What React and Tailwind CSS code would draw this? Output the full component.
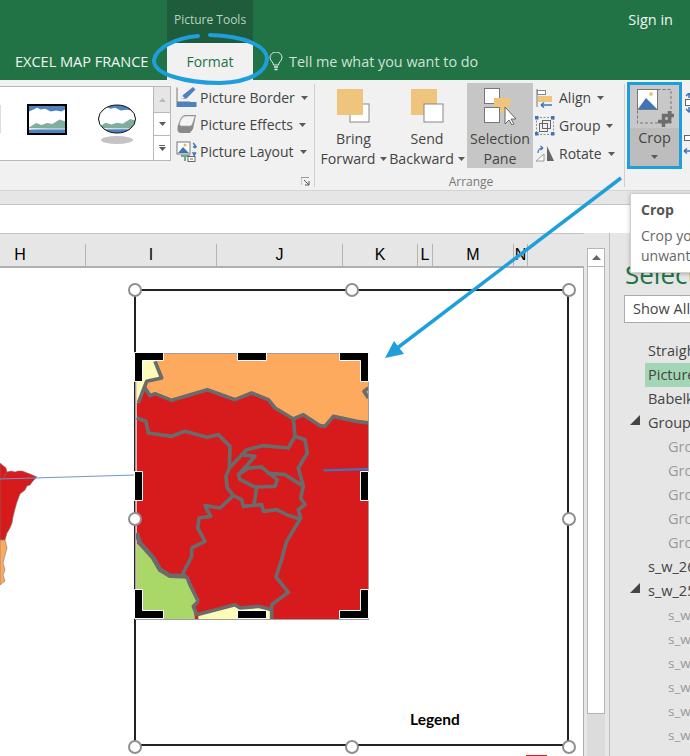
import React from "react";

const FONT = "font-['Open_Sans','Noto_Sans',sans-serif]";

function Caret({ className = "" }) {
  return <svg width="7" height="4" viewBox="0 0 7 4" className={className}><path d="M0 0h7L3.500 4z" fill="#5a5a5a" /></svg>;
}

function SmallRow({ icon, label, height = "h-[27px]" }) {
  return (
    <div className={`flex items-center ${height} gap-[3px]`}>
      <div className="w-[21px] h-[21px] shrink-0">{icon}</div>
      <span className="text-[14px] leading-none text-[#444] whitespace-nowrap">{label}</span>
      <Caret className="ml-[3px] shrink-0" />
    </div>
  );
}

const BorderIcon = (
  <svg viewBox="0 0 21 21" width="21" height="21">
    <path d="M1 .5V15M1 15h13" stroke="#777" strokeWidth="1" fill="none" />
    <path d="M5 12l2-4 10-8 2.500 2.500-9 9z" fill="#4f81bd" />
    <path d="M5 12l1.500-3 2 2z" fill="#fff" />
    <rect x="0.500" y="15" width="20" height="5" fill="#4f81bd" />
  </svg>
);
const EffectsIcon = (
  <svg viewBox="0 0 21 21" width="21" height="21">
    <path d="M4 6c1-3 3-5 6-5h10l-3 14-3 4H5C1 19 1 15 2 11z" fill="#8a8a8a" />
    <path d="M4 8c1-3 3-6 6-6h9l-3 9-2 1H6c-2 0-3-1-2-4z" fill="#f4f4f4" stroke="#aaa" strokeWidth=".6" />
  </svg>
);
const LayoutIcon = (
  <svg viewBox="0 0 21 21" width="21" height="21">
    <rect x="1" y="1" width="13" height="12" fill="#fff" stroke="#777" />
    <path d="M2 12l5-6 6 6z" fill="#3f75b5" />
    <circle cx="9" cy="4" r="1.500" fill="#e8b35a" />
    <path d="M17 2c2 1 3 2 2 5M19 7l-2-1.500M19 7l1.500-2M17 12l2.500 0-1.200 2.500z" stroke="#3f75b5" strokeWidth="1.300" fill="#3f75b5" />
    <path d="M5 14h9v2h-4v4H8v-4H5z" fill="#6fa88e" />
    <rect x="12" y="15.500" width="7" height="5" fill="#fff" stroke="#666" />
    <path d="M14 18h3" stroke="#666" />
  </svg>
);
const AlignIcon = (
  <svg viewBox="0 0 20 20" width="20" height="20">
    <path d="M2 1v18" stroke="#777" />
    <rect x="2.500" y="2.500" width="8" height="4" fill="#fff" stroke="#888" />
    <rect x="3" y="8" width="14" height="6" fill="#efc57d" />
    <path d="M17 17H6M6 17l3-2.500M6 17l3 2.500" stroke="#3f75b5" strokeWidth="1.500" fill="none" />
  </svg>
);
const GroupIcon = (
  <svg viewBox="0 0 20 20" width="20" height="20">
    <rect x="1.500" y="1.500" width="17" height="17" fill="none" stroke="#777" strokeDasharray="2 1.500" strokeWidth=".8" />
    <rect x="4.500" y="7.500" width="8" height="8" fill="none" stroke="#666" />
    <rect x="7.500" y="4.500" width="8" height="8" fill="none" stroke="#666" />
    {[[0, 0], [16, 0], [0, 16], [16, 16]].map(([x, y]) => <rect key={`${x}${y}`} x={x} y={y} width="3.500" height="3.500" fill="#3f75b5" />)}
  </svg>
);
const RotateIcon = (
  <svg viewBox="0 0 20 20" width="20" height="20">
    <path d="M1 17L9 10v7z" fill="#fff" stroke="#999" />
    <path d="M12 2l7 15h-7z" fill="#666" />
    <path d="M3 9c0-4 2-5 5-5M8 4L5.500 2M8 4L5.500 6" stroke="#3f75b5" strokeWidth="1.200" fill="none" />
  </svg>
);

function ArrangeButton({ top, bottom, icon, width, active, caret }) {
  return (
    <div className={`flex flex-col items-center h-[85px] ${width} ${active ? "bg-[#c6c6c6]" : ""}`}>
      <div className={`h-[46px] shrink-0 flex items-start ${active ? "pt-[5px]" : "pt-[6px]"}`}>{icon}</div>
      <span className="text-[14.200px] leading-[20px] text-[#444] whitespace-nowrap">{top}</span>
      <span className="text-[14.200px] leading-[20px] text-[#444] whitespace-nowrap flex items-center">
        {bottom}
        {caret && <Caret className="ml-[4px]" />}
      </span>
    </div>
  );
}

function Landscape({ x, y, w, h }) {
  const sx = w / 40;
  const sy = h / 30;
  const p = pts => pts.map(([a, b]) => `${x + a * sx},${y + b * sy}`).join(" ");
  return (
    <g>
      <rect x={x} y={y} width={w} height={h} fill="#4f81bd" />
      <polygon points={p([[0, 6], [5, 4], [9, 2], [13, 4], [18, 3], [24, 6], [30, 5], [36, 6], [40, 4], [40, 23], [0, 26]])} fill="#fff" />
      <polygon points={p([[0, 24], [8, 19], [14, 21], [20, 19], [26, 20], [34, 15], [40, 17], [40, 25], [0, 25]])} fill="#7fae9d" />
      <rect x={x} y={y + 25 * sy} width={w} height={1 * sy} fill="#fff" />
    </g>
  );
}

function Gallery() {
  return (
    <div className="flex h-[75px] w-[171px] mt-[6px] bg-white border-y border-r border-[#b8b8b8]">
      <div className="flex-1 relative">
        <svg width="153" height="73" viewBox="0 0 153 73" className="block">
          <defs>
            <clipPath id="oval"><ellipse cx="117" cy="32" rx="18.500" ry="14" /></clipPath>
          </defs>
          <path d="M0 18h1v28H0z" fill="#ddd" />
          <rect x="27" y="17" width="40" height="31" fill="#000" />
          <Landscape x={29} y={19} w={36} h={27} />
          <g clipPath="url(#oval)"><Landscape x={98} y={18} w={38} h={28} /></g>
          <ellipse cx="117" cy="32" rx="18.500" ry="14" fill="none" stroke="#111" strokeWidth="1" />
          <ellipse cx="117" cy="53" rx="16" ry="4" fill="#c4c4c4" />
        </svg>
      </div>
      <div className="w-[17px] flex flex-col border-l border-[#b8b8b8]">
        <div className="h-[26px] bg-[#e6e6e6] border-b border-[#b8b8b8] flex items-center justify-center">
          <svg width="7" height="4" viewBox="0 0 7 4"><path d="M3.500 0L7 4H0z" fill="#bbb" /></svg>
        </div>
        <div className="h-[23px] border-b border-[#b8b8b8] flex items-center justify-center"><Caret /></div>
        <div className="flex-1 flex flex-col items-center justify-center gap-[1px]">
          <div className="w-[6px] h-px bg-[#666]" />
          <Caret />
        </div>
      </div>
    </div>
  );
}

function Ribbon() {
  return (
    <div className="h-[111px] bg-[#f1f1f1] flex shrink-0 border-b border-[#d4d4d4]">
      <Gallery />
      <div className="w-[144px] shrink-0 relative border-r border-[#cfcfcf] mt-[4px] h-[103px] pl-[5px]">
        <div className="flex flex-col">
          <SmallRow icon={BorderIcon} label="Picture Border" />
          <SmallRow icon={EffectsIcon} label="Picture Effects" />
          <SmallRow icon={LayoutIcon} label="Picture Layout" />
        </div>
        <svg width="9" height="9" viewBox="0 0 9 9" className="absolute right-[4px] bottom-[1px]">
          <path d="M0 8V.5h8" stroke="#999" fill="none" />
          <path d="M3 3l5 5M8 4v4H4" stroke="#555" fill="none" />
        </svg>
      </div>
      <div className="w-[310px] shrink-0 relative border-r border-[#cfcfcf] mt-[4px] h-[103px]">
        <div className="flex pl-[5px] -mt-px">
          <ArrangeButton
            width="w-[67px]" top="Bring" bottom="Forward" caret
            icon={<svg width="33" height="35" viewBox="0 0 33 35"><rect x="13" y="15" width="19" height="18" fill="#fff" stroke="#888" /><rect x="0" y="0" width="26" height="26" fill="#efc57d" /></svg>}
          />
          <ArrangeButton
            width="w-[80px]" top="Send" bottom="Backward" caret
            icon={<svg width="33" height="35" viewBox="0 0 33 35"><rect x="0" y="0" width="26" height="26" fill="#efc57d" /><rect x="13" y="15" width="19" height="18" fill="#fff" stroke="#888" /></svg>}
          />
          <ArrangeButton
            width="w-[66px]" top="Selection" bottom="Pane" active
            icon={<svg width="33" height="37" viewBox="0 0 33 37"><rect x=".5" y=".5" width="15" height="15" fill="#fff" stroke="#777" /><rect x=".5" y="19.500" width="15" height="15" fill="#fff" stroke="#777" /><rect x="10" y="10" width="16" height="9" fill="#efc57d" /><rect x="16" y="19" width="6" height="6" fill="#efc57d" /><path d="M21 19v17l4-4 3 5 2-1-3-5h5z" fill="#fff" stroke="#666" /></svg>}
          />
          <div className="flex flex-col pl-[2px] pt-[1px]">
            <SmallRow icon={AlignIcon} label="Align" height="h-[28px]" />
            <SmallRow icon={GroupIcon} label="Group" height="h-[28px]" />
            <SmallRow icon={RotateIcon} label="Rotate" height="h-[28px]" />
          </div>
        </div>
        <div className="absolute left-0 right-0 -bottom-[3px] text-center text-[12px] leading-[16px] text-[#777] pl-[3px]">Arrange</div>
      </div>
      <div className="flex-1 relative min-w-0 pl-[2px]">
        <div className="w-[55px] h-[87px] mt-[2px] border-[3px] border-[#1e9fdb] bg-[#bdbdbd] flex flex-col items-center">
          <div className="w-full h-[43px] bg-[#c8c8c8] flex items-center justify-center shrink-0">
            <svg width="40" height="40" viewBox="0 0 40 40">
              <rect x="2.500" y="2.500" width="33.500" height="33.500" fill="none" stroke="#777" strokeDasharray="3 2" />
              <rect x="2.500" y="2.500" width="20" height="20" fill="#fff" stroke="#777" />
              <path d="M3 22l8-11 11 11z" fill="#3f75b5" />
              <circle cx="16" cy="7" r="2" fill="#efc57d" />
              <path d="M28.500 40V28.500H39M23 34.500H34.500V24" fill="none" stroke="#6e6e6e" strokeWidth="3.500" />
            </svg>
          </div>
          <span className="text-[14.500px] leading-[20px] text-[#444]">Crop</span>
          <Caret className="mt-[7px]" />
        </div>
        <svg width="10" height="64" viewBox="0 0 10 64" className="absolute left-[58px] top-[13px]">
          <path d="M3 3l3-3 3 3M6 0v5M3 16l3 3 3-3M6 14v5" stroke="#3f75b5" strokeWidth="1.500" fill="none" />
          <rect x="2.500" y="6.500" width="6" height="6" fill="#fff" stroke="#666" />
          <rect x="1.500" y="42.500" width="9" height="5" fill="#fff" stroke="#666" />
          <path d="M1 58h9M1 58l3-2.500M1 58l3 2.500" stroke="#3f75b5" strokeWidth="1.500" fill="none" />
        </svg>
      </div>
    </div>
  );
}

const COLS = [
  ["H", "w-[86px]", "pr-[45px]"],
  ["I", "w-[131px]", ""],
  ["J", "w-[126px]", ""],
  ["K", "w-[75px]", ""],
  ["L", "w-[15px]", ""],
  ["M", "w-[81px]", ""],
  ["N", "w-[14px]", ""],
];

function ColumnHeader() {
  return (
    <div className="h-[35px] bg-[#e6e6e6] border-t border-[#c4c4c4] border-b-2 border-b-[#b0b0b0] flex shrink-0 items-end">
      {COLS.map(([l, w, p]) => (
        <div key={l} className={`${w} ${p} h-[22px] shrink-0 border-r border-[#b4b4b4] flex items-center justify-center text-[16px] leading-none text-black font-['Liberation_Sans',sans-serif]`}>
          {l}
        </div>
      ))}
    </div>
  );
}

function Handle({ className }) {
  return <div className={`absolute w-[14px] h-[14px] rounded-full bg-white border-2 border-[#8f8f8f] ${className}`} />;
}

function CropHandle({ className, d, w, h }) {
  return (
    <svg width={w} height={h} viewBox={`0 0 ${w} ${h}`} className={`absolute ${className}`}>
      <path d={d} fill="#000" stroke="#fff" strokeWidth="1" />
    </svg>
  );
}

function MapPicture() {
  return (
    <div className="absolute left-[135px] top-[85px] w-[234px] h-[267px] border border-[#a0a0a0] bg-white">
      <svg width="232" height="265" viewBox="48 43 696 795" preserveAspectRatio="none" className="block">
        <rect x="50" y="43" width="694" height="795" fill="#d71a1c" />
        <polygon points="50,43 105,43 125,115 80,125 55,190 50,190" fill="#fdfbb8" />
        <polygon points="105,43 745,43 745,250 710,245 640,230 615,260 600,258 550,225 520,238 465,205 445,180 395,160 345,180 262,150 155,182 105,162 90,168 72,140 80,125 125,115" fill="#fdaa5e" />
        <polygon points="50,610 100,660 125,695 150,708 195,710 215,740 235,785 220,800 225,838 50,838" fill="#a9d869" />
        <polygon points="235,822 345,795 360,805 420,800 450,810 455,838 235,838" fill="#fdfbb8" />
        <g fill="none" stroke="#6b6b6b" strokeWidth="11" strokeLinejoin="round">
          <polyline points="105,65 125,115 80,125 55,190" />
          <polyline points="72,140 90,168 105,162 155,182 262,150 345,180 395,160 445,180 465,205 520,238 550,225 600,258 615,260 640,230 710,245 745,250" />
          <polyline points="50,235 78,245 85,280 155,290 195,275 262,293 295,285 330,320 328,385 318,410 322,445 340,468 300,505 255,498 272,530 237,535 233,565 255,605 215,625 215,650 187,705" />
          <polyline points="520,238 525,290 505,325 430,318 380,330 328,385" />
          <polyline points="525,290 555,300 562,340 535,385 550,440 542,475 555,495 535,510 542,535 500,605 490,640 485,660 468,712 505,758 455,795 455,838" />
          <polyline points="360,345 405,350 355,405 360,420 405,442 465,440 472,420 440,395 425,382 385,385 355,405" />
          <polyline points="340,468 365,480 370,500 425,495 430,515 470,510 500,525 540,538" />
          <polyline points="410,445 402,495" />
          <polyline points="440,400 495,405 550,440" />
          <polyline points="745,145 732,155 745,175" />
          <polyline points="235,785 220,800 230,825 345,795 360,805 415,800 455,810" />
          <polyline points="200,710 210,735 235,785" />
          <polyline points="50,580 60,610 100,655 120,690 150,708 200,710" strokeWidth="14" />
        </g>
        <path d="M610 392L745 388" stroke="#4a6fb5" strokeWidth="7" />
      </svg>
    </div>
  );
}

function Sheet() {
  return (
    <div className="flex-1 relative bg-white border-r border-[#b0b0b0] overflow-hidden">
      <svg width="140" height="140" viewBox="0 0 140 140" className="absolute left-0 top-[195px]">
        <polygon points="0,0 6,5 7,9 11,8 15,9 18,8 22,8 30,11 37,14 33,18 30,22 27,23 25,27 20,31 17,39 15,46 13,54 12,60 10,65 7,70 5,77 0,77" fill="#d71a1c" stroke="#777" strokeWidth=".6" />
        <polygon points="0,77 5,77 7,85 5,92 3,100 5,107 3,112 5,118 0,122" fill="#fdaa5e" stroke="#777" strokeWidth=".6" />
        <path d="M0 16L135 12" stroke="#6f96cc" strokeWidth="1" />
        <path d="M7 9L3 16" stroke="#777" strokeWidth=".6" />
      </svg>
      <div className="absolute left-[134px] top-[21px] w-[435px] h-[457px] border-2 border-[#222]" />
      <MapPicture />
      <Handle className="left-[128px] top-[15px]" />
      <Handle className="left-[345px] top-[15px]" />
      <Handle className="left-[562px] top-[15px]" />
      <Handle className="left-[128px] top-[244px]" />
      <Handle className="left-[562px] top-[244px]" />
      <Handle className="left-[128px] top-[472px]" />
      <Handle className="left-[345px] top-[472px]" />
      <Handle className="left-[562px] top-[472px]" />
      <CropHandle className="left-[134px] top-[84px]" w={30} h={30} d="M.5.500h29v8h-21v21h-8z" />
      <CropHandle className="left-[339px] top-[84px]" w={30} h={30} d="M.5.500h29v29h-8v-21h-21z" />
      <CropHandle className="left-[134px] top-[321px]" w={30} h={30} d="M.5.500h8v21h21v8H.5z" />
      <CropHandle className="left-[339px] top-[321px]" w={30} h={30} d="M21.500.500h8v29H.5v-8h21z" />
      <CropHandle className="left-[237px] top-[84px]" w={30} h={9} d="M.5.500h29v8H.5z" />
      <CropHandle className="left-[237px] top-[342px]" w={30} h={9} d="M.5.500h29v8H.5z" />
      <CropHandle className="left-[134px] top-[203px]" w={9} h={30} d="M.5.500h8v29h-8z" />
      <CropHandle className="left-[360px] top-[203px]" w={9} h={30} d="M.5.500h8v29h-8z" />
      <div className="absolute left-[410px] top-[442px] text-[15.500px] leading-[18px] font-bold text-black font-['Lato',sans-serif]">Legend</div>
      <div className="absolute left-[526px] top-[487px] w-[21px] h-[2px] bg-[#d71a1c]" />
    </div>
  );
}

function Scrollbar() {
  return (
    <div className="w-[26px] shrink-0 bg-[#e6e6e6] border-r border-[#bdbdbd] pl-[3px] pr-[4px] pt-[15px] flex flex-col">
      <div className="h-[19px] bg-white border border-[#b4b4b4] flex items-center justify-center shrink-0">
        <svg width="9" height="5" viewBox="0 0 9 5"><path d="M4.500 0L9 5H0z" fill="#666" /></svg>
      </div>
      <div className="h-[447px] bg-white border-x border-b border-[#b4b4b4] shrink-0" />
      <div className="flex-1 bg-[#dcdcdc]" />
    </div>
  );
}

const ROWS = [
  ["Straight Arrow Connector 5", 0],
  ["Picture 3", 0, "sel"],
  ["Babelkit Logo", 0],
  ["Group 12", 0, "tri"],
  ["Group 7", 1],
  ["Group 8", 1],
  ["Group 9", 1],
  ["Group 10", 1],
  ["Group 11", 1],
  ["s_w_26", 0],
  ["s_w_25", 0, "tri"],
  ["s_w_24", 2],
  ["s_w_23", 2],
  ["s_w_22", 2],
  ["s_w_21", 2],
  ["s_w_20", 2],
  ["s_w_19", 2],
];

function Pane() {
  return (
    <div className="flex-1 min-w-0 bg-[#e6e6e6] overflow-hidden pt-[24px]">
      <div className="pl-[15px] text-[26px] leading-[34px] text-[#217346] whitespace-nowrap">Selection</div>
      <div className="ml-[14px] mt-[4px] h-[28px] w-[100px] bg-white border border-[#ababab] flex items-center pl-[8px] text-[14.500px] text-[#444] whitespace-nowrap">Show All</div>
      <div className="flex flex-col mt-[16px]">
        {ROWS.map(([t, lvl, flag]) => (
          <div key={t} className={`relative h-[24px] flex items-center whitespace-nowrap ${flag === "sel" ? "bg-[#a3d6b5] ml-[35px] pl-[3px]" : lvl ? "ml-[58px]" : "ml-[38px]"} ${lvl === 0 ? "text-[#444] text-[14.500px]" : lvl === 1 ? "text-[#9a9a9a] text-[14.500px]" : "text-[#9a9a9a] text-[13.500px]"}`}>
            {flag === "tri" && (
              <svg width="10" height="10" viewBox="0 0 10 10" className="absolute -left-[18px] top-[4px]"><path d="M10 0v10H0z" fill="#444" /></svg>
            )}
            {t}
          </div>
        ))}
      </div>
    </div>
  );
}

export default function App() {
  return (
    <div className={`relative w-[690px] h-[756px] overflow-hidden flex flex-col bg-white ${FONT}`}>
      <header className="h-[80px] bg-[#217346] shrink-0 flex flex-col">
        <div className="h-[43px] flex shrink-0">
          <div className="ml-[167px] w-[86px] bg-[#1e5c3b] text-[12px] leading-[40px] text-[#b9d3c5] text-center whitespace-nowrap">Picture Tools</div>
          <div className="ml-auto mr-[17px] text-[14.500px] leading-[40px] text-[#f1f6f3]">Sign in</div>
        </div>
        <div className="flex-1 flex items-stretch">
          <div className="w-[167px] pl-[15px] flex items-center text-[14.600px] tracking-[-0.05px] text-[#f1f6f3] whitespace-nowrap">EXCEL MAP FRANCE</div>
          <div className="w-[86px] bg-[#f1f1f1] flex items-center justify-center text-[14px] text-[#217346]">Format</div>
          <div className="flex items-center pl-[16px] gap-[6px] text-[14.400px] text-[#cfe1d7] whitespace-nowrap">
            <svg width="14" height="19" viewBox="0 0 14 19">
              <path d="M4.500 13c0-3-3.500-4-3.500-7.500a6 5.500 0 0 1 12 0C13 9 9.500 10 9.500 13z" fill="none" stroke="#e4eee9" strokeWidth="1" />
              <path d="M5 15h4M5.500 17.500h3" stroke="#e4eee9" strokeWidth="1.500" />
            </svg>
            Tell me what you want to do
          </div>
        </div>
      </header>
      <Ribbon />
      <div className="h-[14px] bg-[#e6e6e6] border-b border-[#c4c4c4] shrink-0" />
      <div className="h-[28px] bg-white shrink-0" />
      <div className="flex-1 flex min-h-0">
        <div className="w-[584px] shrink-0 flex flex-col">
          <ColumnHeader />
          <Sheet />
        </div>
        <Scrollbar />
        <Pane />
      </div>

      {/* callout tooltip */}
      <div className="absolute left-[630px] top-[193px] w-[200px] h-[80px] bg-white border border-[#d0d0d0] shadow-[0_1px_4px_rgba(0,0,0,0.25)] pl-[10px] pt-[6px]">
        <div className="text-[14px] leading-[20px] font-bold text-[#555]">Crop</div>
        <div className="text-[14px] leading-[20px] text-[#666] mt-[6px] whitespace-nowrap">Crop your picture to remove</div>
        <div className="text-[14px] leading-[20px] text-[#666] whitespace-nowrap">unwanted areas</div>
      </div>

      {/* annotation overlay */}
      <svg width="690" height="756" viewBox="0 0 690 756" className="absolute inset-0 pointer-events-none">
        <path d="M621 178L396 349" stroke="#1e9fdb" strokeWidth="3.500" fill="none" />
        <path d="M385 358L394 341 404 354z" fill="#1e9fdb" />
        <path d="M198 36C175 38 156 48 154 60C153 74 185 83 220 83C250 82 267 72 267 58C266 46 245 36 210 35" fill="none" stroke="#1e9fdb" strokeWidth="4" strokeLinecap="round" />
      </svg>
    </div>
  );
}
